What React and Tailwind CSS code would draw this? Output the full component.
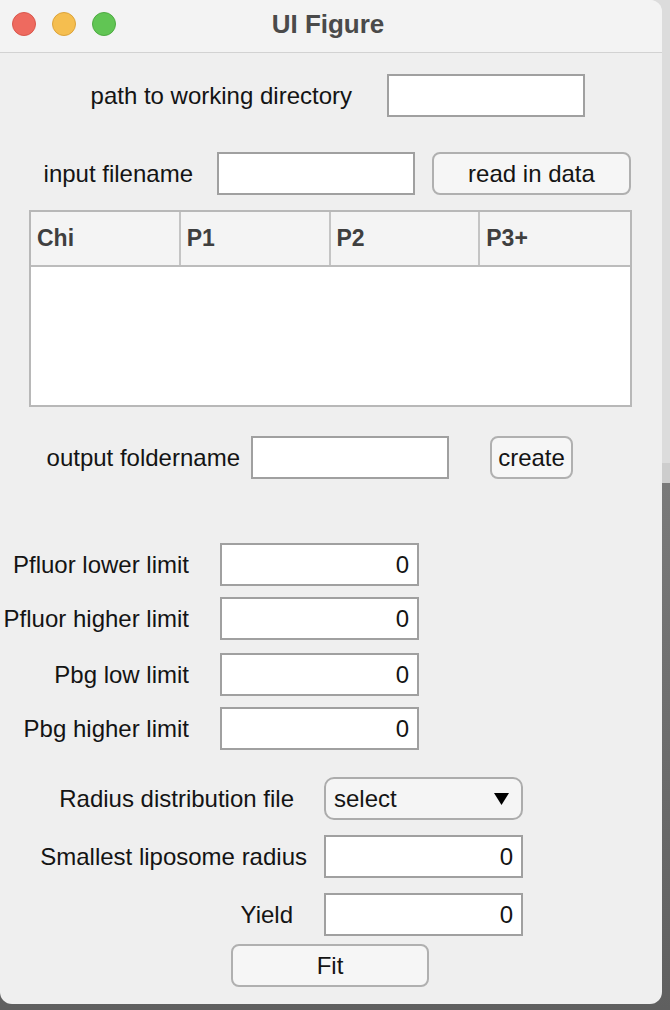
import React from 'react';

function Label({ w, children }) {
    return (
        <div className={`${w} shrink-0 text-right whitespace-nowrap text-[24px] leading-none text-[#141414]`}>
            {children}
        </div>
    );
}

function Field({ className = '', value }) {
    return (
        <div className={`${className} h-[43px] shrink-0 border-2 border-[#a0a0a0] bg-white flex items-center justify-end pr-[8px] text-[24px] leading-none text-[#141414]`}>
            {value}
        </div>
    );
}

function Button({ className = '', children }) {
    return (
        <div className={`${className} h-[43px] shrink-0 rounded-[8px] border-2 border-[#b0b0b0] bg-[#f6f6f6] flex items-center justify-center text-[24px] leading-none text-[#141414]`}>
            {children}
        </div>
    );
}

export default function App() {
    const cols = ['Chi', 'P1', 'P2', 'P3+'];

    return (
        <div
            className="w-[670px] h-[1010px] overflow-hidden bg-[linear-gradient(to_bottom,#dcdcdc_0px,#dcdcdc_463px,#cdcdcd_463px,#cdcdcd_483px,#7a7a7a_483px,#5f5f5f_100%)]"
            style={{ fontFamily: '"Liberation Sans", Arial, sans-serif' }}
        >
            <div className="w-[662px] h-[1004px] rounded-tr-[12px] rounded-b-[12px] bg-[#efefef] flex flex-col overflow-hidden">
                {/* Title bar */}
                <div className="h-[53px] shrink-0 bg-[#f3f3f3] border-b border-[#d2d2d2] grid grid-cols-[1fr_auto_1fr] items-center pb-[4px]">
                    <div className="flex items-center gap-[16px] pl-[12px]">
                        <div className="w-[24px] h-[24px] rounded-full bg-[#ee6a5f] border border-[#d9574c]" />
                        <div className="w-[24px] h-[24px] rounded-full bg-[#f5be4f] border border-[#dca33a]" />
                        <div className="w-[24px] h-[24px] rounded-full bg-[#61c554] border border-[#4eab42]" />
                    </div>
                    <div className="text-[26px] font-bold text-[#4a4a4a] leading-none pr-[6px]">UI Figure</div>
                    <div />
                </div>

                {/* path to working directory */}
                <div className="mt-[21px] flex items-center">
                    <Label w="w-[352px]">path to working directory</Label>
                    <Field className="ml-[35px] w-[198px]" />
                </div>

                {/* input filename */}
                <div className="mt-[35px] flex items-center">
                    <Label w="w-[193px]">input filename</Label>
                    <Field className="ml-[24px] w-[198px]" />
                    <Button className="ml-[17px] w-[199px]">read in data</Button>
                </div>

                {/* table */}
                <div className="mt-[15px] ml-[29px] w-[603px] h-[197px] border-2 border-[#b8b8b8] bg-white flex flex-col">
                    <div className="h-[55px] grid grid-cols-4 bg-[#f4f4f4] border-b-2 border-[#bcbcbc]">
                        {cols.map((c, i) => (
                            <div
                                key={c}
                                className={`flex items-center pl-[6px] text-[23px] font-bold text-[#3f3f3f] leading-none ${i < 3 ? 'border-r-2 border-[#c4c4c4]' : ''}`}
                            >
                                {c}
                            </div>
                        ))}
                    </div>
                    <div className="flex-1 bg-white" />
                </div>

                {/* output foldername */}
                <div className="mt-[29px] flex items-center">
                    <Label w="w-[240px]">output foldername</Label>
                    <Field className="ml-[11px] w-[198px]" />
                    <Button className="ml-[41px] w-[83px]">create</Button>
                </div>

                {/* limits */}
                <div className="mt-[64px] flex items-center">
                    <Label w="w-[189px]">Pfluor lower limit</Label>
                    <Field className="ml-[31px] w-[199px]" value="0" />
                </div>
                <div className="mt-[11px] flex items-center">
                    <Label w="w-[189px]">Pfluor higher limit</Label>
                    <Field className="ml-[31px] w-[199px]" value="0" />
                </div>
                <div className="mt-[13px] flex items-center">
                    <Label w="w-[189px]">Pbg low limit</Label>
                    <Field className="ml-[31px] w-[199px]" value="0" />
                </div>
                <div className="mt-[11px] flex items-center">
                    <Label w="w-[189px]">Pbg higher limit</Label>
                    <Field className="ml-[31px] w-[199px]" value="0" />
                </div>

                {/* radius distribution */}
                <div className="mt-[27px] flex items-center">
                    <Label w="w-[294px]">Radius distribution file</Label>
                    <div className="ml-[30px] w-[199px] h-[43px] rounded-[10px] border-2 border-[#acacac] bg-[#f5f5f5] flex items-center justify-between pl-[8px] pr-[12px] text-[24px] leading-none text-[#141414]">
                        <span>select</span>
                        <svg width="15" height="12" viewBox="0 0 15 12">
                            <path d="M0 0H15L7.5 12Z" fill="#000" />
                        </svg>
                    </div>
                </div>
                <div className="mt-[15px] flex items-center">
                    <Label w="w-[307px]">Smallest liposome radius</Label>
                    <Field className="ml-[17px] w-[199px]" value="0" />
                </div>
                <div className="mt-[15px] flex items-center">
                    <Label w="w-[293px]">Yield</Label>
                    <Field className="ml-[31px] w-[199px]" value="0" />
                </div>
                <div className="mt-[8px] flex items-center">
                    <Button className="ml-[231px] w-[198px]">Fit</Button>
                </div>
            </div>
        </div>
    );
}
